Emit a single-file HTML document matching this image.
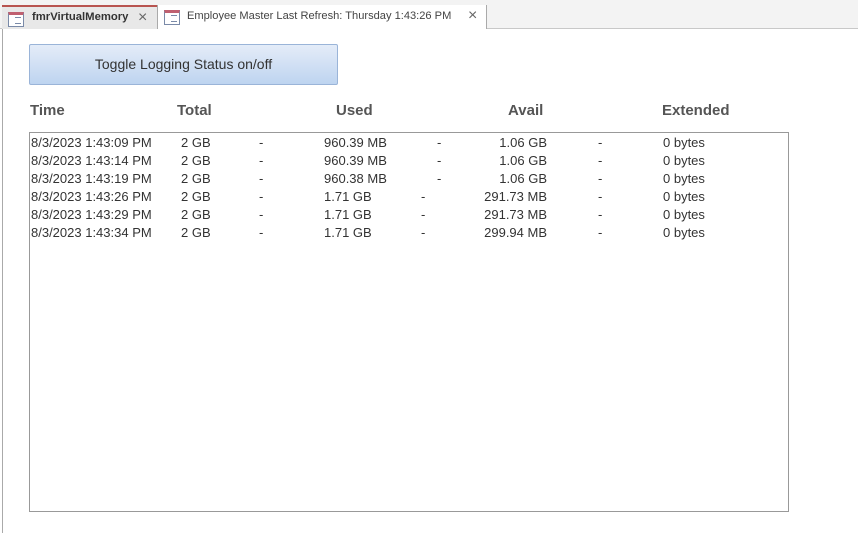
<!DOCTYPE html>
<html><head><style>
body{margin:0;width:858px;height:533px;background:#fff;position:relative;overflow:hidden;font-family:"Liberation Sans",sans-serif;color:#333}
.a{position:absolute;white-space:nowrap}
.tabbar{position:absolute;left:0;top:0;width:858px;height:28px;background:#f3f3f3;border-bottom:1px solid #c8c8c8}
.t1{position:absolute;left:2px;top:5px;width:155px;height:24px;background:#e8e8e8;border-top:2px solid #b85450;box-sizing:border-box}
.t2{position:absolute;left:157px;top:5px;width:330px;height:24px;background:#fff;border-left:1px solid #aaa;border-right:1px solid #aaa;box-sizing:border-box}
.ic{position:absolute;top:5px;width:14px;height:11px;border:1px solid #7a8aa8;border-top:3px solid #c06070;background:#fff}
.ic:after{content:"";position:absolute;left:6px;top:2px;width:6px;height:5px;border-top:1px solid #7a8aa8;border-bottom:1px solid #7a8aa8}
.x{position:absolute;top:2px;font-size:16px;color:#666}
.btn{position:absolute;left:29px;top:44px;width:307px;height:39px;border:1px solid #9ab4d8;border-radius:2px;background:linear-gradient(#e4ecf8,#bed4f0);font-size:14px;text-align:center;line-height:39px;color:#333}
.h{position:absolute;top:102px;font-size:15px;font-weight:bold;color:#555}
.box{position:absolute;left:29px;top:132px;width:758px;height:378px;border:1px solid #999}
.r{position:absolute;font-size:13px;color:#333;white-space:nowrap}
.rt{text-align:right}
</style></head><body>
<div class="tabbar"></div>
<div class="t1"><div class="ic" style="left:6px"></div><span class="a" style="left:30px;top:4px;font-size:11.3px;font-weight:bold;color:#333">fmrVirtualMemory</span><span class="x" style="left:136px">×</span></div>
<div class="t2"><div class="ic" style="left:6px"></div><span class="a" style="left:29px;top:5px;font-size:11.1px;color:#444">Employee Master Last Refresh: Thursday 1:43:26 PM</span><span class="x" style="left:310px">×</span></div>
<div style="position:absolute;left:2px;top:29px;width:1px;height:504px;background:#aaa"></div>
<div class="btn">Toggle Logging Status on/off</div>
<div class="h" style="left:30px">Time</div>
<div class="h" style="left:177px">Total</div>
<div class="h" style="left:336px">Used</div>
<div class="h" style="left:508px">Avail</div>
<div class="h" style="left:662px">Extended</div>
<div class="box"></div>
<div id="rows"></div>
<script>
var d=[["8/3/2023 1:43:09 PM","960.39 MB",437,"1.06 GB"],["8/3/2023 1:43:14 PM","960.39 MB",437,"1.06 GB"],["8/3/2023 1:43:19 PM","960.38 MB",437,"1.06 GB"],["8/3/2023 1:43:26 PM","1.71 GB",421,"291.73 MB"],["8/3/2023 1:43:29 PM","1.71 GB",421,"291.73 MB"],["8/3/2023 1:43:34 PM","1.71 GB",421,"299.94 MB"]];
var h="";d.forEach(function(r,i){var y=135+i*18;
h+='<div class="r" style="left:31px;top:'+y+'px">'+r[0]+'</div>'+
'<div class="r" style="left:181px;top:'+y+'px">2 GB</div>'+
'<div class="r" style="left:259px;top:'+y+'px">-</div>'+
'<div class="r" style="left:324px;top:'+y+'px">'+r[1]+'</div>'+
'<div class="r" style="left:'+r[2]+'px;top:'+y+'px">-</div>'+
'<div class="r rt" style="left:447px;width:100px;top:'+y+'px">'+r[3]+'</div>'+
'<div class="r" style="left:598px;top:'+y+'px">-</div>'+
'<div class="r" style="left:663px;top:'+y+'px">0 bytes</div>';});
document.getElementById("rows").innerHTML=h;
</script>
</body></html>
